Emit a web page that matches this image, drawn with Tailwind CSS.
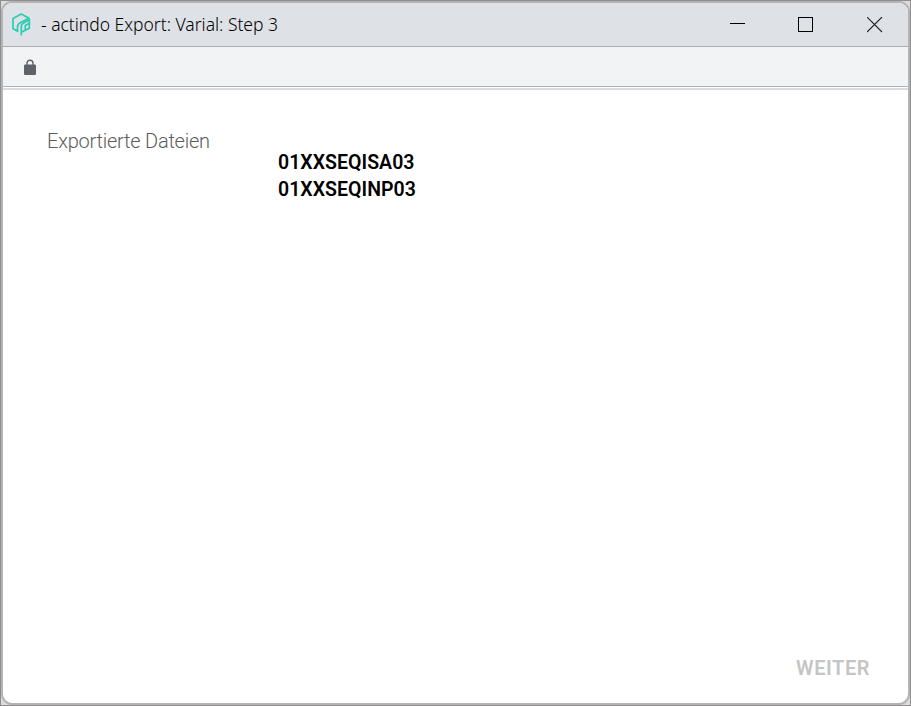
<!DOCTYPE html>
<html lang="de">
<head>
<meta charset="utf-8">
<title>actindo Export: Varial: Step 3</title>
<script src="https://cdn.jsdelivr.net/npm/@tailwindcss/browser@4"></script>
</head>
<body class="h-[706px] w-[911px] overflow-hidden border border-[#8f8d8e] bg-[#dcdcdc] font-['Roboto',sans-serif]">
<div class="flex h-[704px] w-[909px] flex-col overflow-hidden rounded-[11px] border-2 border-[#b5b4b4] bg-white">
  <header class="flex h-11 shrink-0 items-center border-b border-[#a9abae] bg-[#dee1e6]">
    <svg class="ml-[9px] h-6 w-[19px] shrink-0" viewBox="0 0 19 24" fill="none" stroke="#2bcdb0" stroke-width="1.7" stroke-linejoin="round">
      <path d="M5.500 18.300 1 15.600V5.500L9.200 1l7.800 4.300-8.500 4.300Q5.500 11.200 5.500 14z"/>
      <path d="M9.300 22.500V13q0-1.600 1.500-2.500L17.300 6.700v8.600L9.300 19.300M13.300 17V12.500l4-2.200"/>
    </svg>
    <h1 class="ml-[10px] whitespace-pre pb-0.5 font-['Noto_Sans',sans-serif] text-[17.500px] font-light leading-6 tracking-[-0.010px] text-black">- actindo Export: Varial: Step 3</h1>
    <div class="ml-auto mr-[25px] flex items-center gap-[53px]">
      <svg class="h-4 w-4" viewBox="-1 0 16 16" shape-rendering="crispEdges"><path d="M0 6h15v1H0z" fill="#000"/></svg>
      <svg class="h-4 w-4" viewBox="0 0 16 16" fill="none" stroke="#000" shape-rendering="crispEdges"><path d="M.5.5h14v14H.5z"/></svg>
      <svg class="h-4 w-4" viewBox="0 0 16 16" fill="none" stroke="#222" stroke-width="1.100"><path d="m0 0 15 15M15 0 0 15"/></svg>
    </div>
  </header>
  <div class="flex h-10 shrink-0 items-center border-b border-[#aeb0b3] bg-[#f1f3f4]">
    <svg class="ml-[21px] h-4 w-3" viewBox="0 0 12 16"><path d="M3 6V4.200a3 3 0 0 1 6 0V6" fill="none" stroke="#5f6368" stroke-width="1.400"/><rect y="5.500" width="12" height="10.500" rx="1.300" fill="#5f6368"/></svg>
  </div>
  <div class="mt-px h-0.5 shrink-0 bg-[#dadce0]"></div>
  <main class="flex grow flex-col pl-[44px] pr-[38px] pt-[38px]">
    <h2 class="h-[21px] text-[20px] font-light leading-[26px] tracking-[-0.230px] text-[#5c5c5c]">Exportierte Dateien</h2>
    <ul class="ml-[231px] text-[19.500px] font-semibold leading-[27px] tracking-[0.030px] text-black">
      <li>01XXSEQISA03</li>
      <li>01XXSEQINP03</li>
    </ul>
    <button class="mb-[22px] ml-auto mt-auto text-[20px] font-semibold leading-[26px] tracking-[0.550px] text-[#c5c5c5]">WEITER</button>
  </main>
</div>
</body>
</html>
